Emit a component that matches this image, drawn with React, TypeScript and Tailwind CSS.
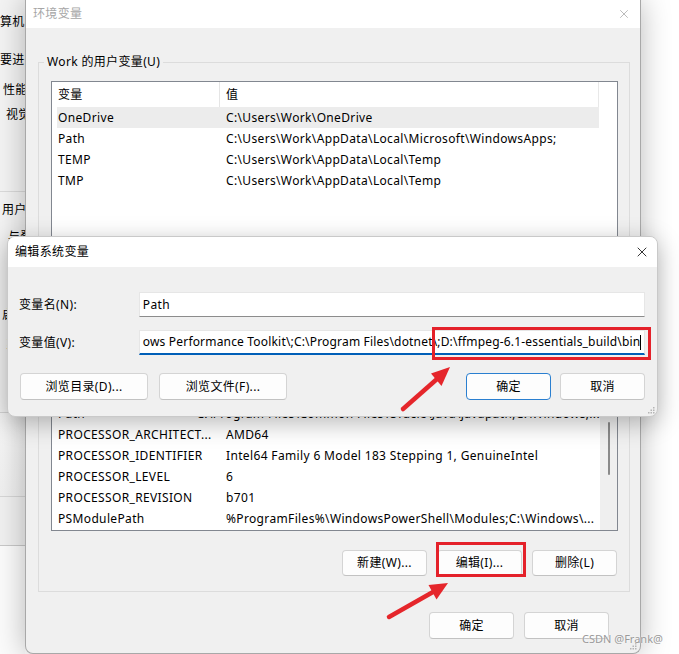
import { X } from "lucide-react";

const userRows = [
  { name: "OneDrive", value: "C:\\Users\\Work\\OneDrive", selected: true },
  { name: "Path", value: "C:\\Users\\Work\\AppData\\Local\\Microsoft\\WindowsApps;" },
  { name: "TEMP", value: "C:\\Users\\Work\\AppData\\Local\\Temp" },
  { name: "TMP", value: "C:\\Users\\Work\\AppData\\Local\\Temp" },
];

const sysRows = [
  { name: "Path", value: "C:\\Program Files\\Common Files\\Oracle\\Java\\javapath;C:\\Windows;..." },
  { name: "PROCESSOR_ARCHITECT...", value: "AMD64" },
  { name: "PROCESSOR_IDENTIFIER", value: "Intel64 Family 6 Model 183 Stepping 1, GenuineIntel" },
  { name: "PROCESSOR_LEVEL", value: "6" },
  { name: "PROCESSOR_REVISION", value: "b701" },
  { name: "PSModulePath", value: "%ProgramFiles%\\WindowsPowerShell\\Modules;C:\\Windows\\..." },
];

function Btn({ label, w, primary }: { label: string; w: string; primary?: boolean }) {
  return (
    <div
      className={`${w} h-full flex items-center justify-center rounded-[4px] bg-[#fdfdfd] border ${
        primary ? "border-[#2a7fd0]" : "border-[#d4d4d4] border-b-[#c2c2c2]"
      } text-[12px] text-black`}
    >
      {label}
    </div>
  );
}

function Grip() {
  return (
    <svg width="7" height="7" viewBox="0 0 7 7" className="fill-[#b4b4b4]">
      <rect x="5" y="0" width="1.5" height="1.5" />
      <rect x="2.5" y="2.5" width="1.5" height="1.5" />
      <rect x="5" y="2.5" width="1.5" height="1.5" />
      <rect x="0" y="5" width="1.5" height="1.5" />
      <rect x="2.5" y="5" width="1.5" height="1.5" />
      <rect x="5" y="5" width="1.5" height="1.5" />
    </svg>
  );
}

function BackWindow() {
  return (
    <div className="absolute left-0 top-0 w-[25px] h-[654px] overflow-hidden bg-[#f3f3f3] flex flex-col text-[12px] text-black leading-none">
      <div className="h-[35px] pt-[16px] whitespace-nowrap">算机名</div>
      <div className="h-[30px] pt-[19px] whitespace-nowrap">要进行</div>
      <div className="h-[29px] pt-[19px] pl-[3px] whitespace-nowrap">性能</div>
      <div className="h-[26px] pt-[15px] pl-[6px] whitespace-nowrap">视觉</div>
      <div className="h-[72px] border-b border-[#dadada]" />
      <div className="h-[25px] pt-[12px] pl-[2px] whitespace-nowrap">用户</div>
      <div className="h-[90px] pt-[14px] pl-[8px] whitespace-nowrap">与登</div>
      <div className="h-[24px] pt-[2px] pl-[2px] whitespace-nowrap">启</div>
      <div className="h-[81px] pt-[8px] pl-[6px] whitespace-nowrap">系</div>
      <div className="h-[84px] border-t border-[#d6d6d6] bg-gradient-to-b from-[#f6f6f6] to-[#efefef]" />
      <div className="h-[49px] border-t border-[#d6d6d6] bg-[#f0f0f0]" />
      <div className="flex-1 border-t border-[#c8c8c8] bg-[#fbfbfb]" />
    </div>
  );
}

function EnvDialog() {
  return (
    <div className="absolute left-[25px] top-0 w-[616px] h-[654px] rounded-b-[8px] overflow-hidden bg-[#f0f0f0] border-l border-r border-b border-[#a8a8a8] shadow-[0_0_30px_rgba(0,0,0,0.28)] flex flex-col">
      <div className="h-[28px] bg-white flex items-center justify-between pl-[7px] pr-[9px] shrink-0">
        <span className="text-[12px] text-[#a6a6a6]">环境变量</span>
        <X size={14} strokeWidth={1} className="text-[#8a8a8a]" />
      </div>
      <div className="flex flex-col pt-[34px]">
        <div className="relative ml-[12px] w-[592px] h-[238px] border border-[#dcdcdc] pt-[18px] pl-[12px]">
          <span className="absolute -top-[9px] left-[5px] px-[3px] bg-[#f0f0f0] text-[12px] leading-[16px] text-black">
            Work 的用户变量(U)
          </span>
          <div className="w-[567px] h-[200px] border border-[#828790] bg-white flex flex-col">
            <div className="w-[547px] h-[25px] flex items-center border-r border-[#e8e8e8] text-[12px] text-black">
              <div className="w-[168px] h-full flex items-center pl-[6px] border-r border-[#e5e5e5]">变量</div>
              <div className="pl-[6px]">值</div>
            </div>
            {userRows.map((r) => (
              <div
                key={r.name}
                className={`ml-[5px] w-[542px] h-[21px] flex items-center text-[12px] text-black ${
                  r.selected ? "bg-[#ececec]" : ""
                }`}
              >
                <div className="w-[169px] pl-[1px] truncate">{r.name}</div>
                <div className="whitespace-nowrap">{r.value}</div>
              </div>
            ))}
          </div>
        </div>
        <div className="relative ml-[12px] mt-[20px] w-[592px] h-[272px] border border-[#dcdcdc] pl-[12px] flex flex-col justify-end pb-[15px]">
          <div className="w-[567px] h-[200px] border border-[#828790] bg-white flex">
            <div className="w-[548px] h-full flex flex-col justify-end pb-[1px] overflow-hidden">
              {sysRows.map((r) => (
                <div key={r.name} className="ml-[5px] h-[21px] shrink-0 flex items-center text-[12px] text-black">
                  <div className="w-[169px] pl-[1px] whitespace-nowrap overflow-hidden">{r.name}</div>
                  <div className="whitespace-nowrap">{r.value}</div>
                </div>
              ))}
            </div>
            <div className="flex-1 bg-[#efefef] flex justify-center pt-[90px]">
              <div className="w-[2px] h-[53px] rounded-full bg-[#8a8a8a]" />
            </div>
          </div>
          <div className="mt-[19px] h-[26px] flex justify-end gap-[10px] pr-[12px]">
            <Btn label="新建(W)..." w="w-[85px]" />
            <Btn label="编辑(I)..." w="w-[85px]" />
            <Btn label="删除(L)" w="w-[85px]" />
          </div>
        </div>
        <div className="mt-[20px] h-[27px] flex justify-end gap-[10px] pr-[31px]">
          <Btn label="确定" w="w-[85px]" />
          <Btn label="取消" w="w-[85px]" />
        </div>
      </div>
      <div className="absolute right-[3px] bottom-[3px]">
        <Grip />
      </div>
    </div>
  );
}

function EditDialog() {
  return (
    <div className="absolute left-[7px] top-[236px] w-[651px] h-[181px] rounded-[8px] overflow-hidden border border-[#c9c9c9] bg-[#f0f0f0] shadow-[0_6px_24px_rgba(0,0,0,0.28)] flex flex-col">
      <div className="h-[30px] bg-white flex items-center justify-between pl-[7px] pr-[7px] shrink-0">
        <span className="text-[12px] text-black">编辑系统变量</span>
        <X size={16} strokeWidth={1.2} className="text-black" />
      </div>
      <div className="flex flex-col pt-[25px] pl-[11px] pr-[12px]">
        <div className="h-[25px] flex items-center">
          <div className="w-[120px] text-[12px] text-black">变量名(N):</div>
          <div className="w-[507px] h-full bg-white border border-[#e6e6e6] border-b-[#8c8c8c] flex items-center pl-[3px] text-[12px] text-black">
            Path
          </div>
        </div>
        <div className="mt-[13px] h-[25px] flex items-center">
          <div className="w-[120px] text-[12px] text-black">变量值(V):</div>
          <div className="w-[507px] h-full bg-white border border-[#e6e6e6] border-b-2 border-b-[#005fb8] flex items-center pl-[3px] text-[12px] text-black overflow-hidden whitespace-nowrap tracking-[0.18px]">
            <span>ows Performance Toolkit\;C:\Program Files\dotnet\;D:\ffmpeg-6.1-essentials_build\bin</span>
            <span className="w-px h-[15px] bg-black shrink-0" />
          </div>
        </div>
        <div className="mt-[18px] h-[27px] flex">
          <div className="flex gap-[11px] h-full pl-[1px]">
            <Btn label="浏览目录(D)..." w="w-[128px]" />
            <Btn label="浏览文件(F)..." w="w-[128px]" />
          </div>
          <div className="flex-1" />
          <div className="flex gap-[9px] h-full">
            <Btn label="确定" w="w-[85px]" primary />
            <Btn label="取消" w="w-[85px]" />
          </div>
        </div>
      </div>
      <div className="absolute right-[2px] bottom-[2px]">
        <Grip />
      </div>
    </div>
  );
}

function Arrows() {
  return (
    <svg className="absolute left-0 top-0 pointer-events-none" width="679" height="654" viewBox="0 0 679 654">
      <line x1="403" y1="409" x2="437" y2="379" stroke="#e5262b" strokeWidth="4.5" strokeLinecap="round" />
      <polygon points="450,367 441.5,386 431,373.5" fill="#e5262b" />
      <line x1="389" y1="617" x2="433" y2="592" stroke="#e5262b" strokeWidth="4.5" strokeLinecap="round" />
      <polygon points="448,583 436.5,599.5 428.5,585" fill="#e5262b" />
    </svg>
  );
}

export default function App() {
  return (
    <div className="relative w-[679px] h-[654px] overflow-hidden bg-white tracking-[0.35px] font-['Noto_Sans','Noto_Sans_CJK_SC',sans-serif]">
      <BackWindow />
      <EnvDialog />
      <EditDialog />
      <div className="absolute left-[432px] top-[327px] w-[219px] h-[33px] border-[3px] border-[#e4212a]" />
      <div className="absolute left-[436px] top-[542px] w-[90px] h-[35px] border-[3px] border-[#e4212a]" />
      <Arrows />
      <div className="absolute left-[582px] top-[631px] text-[11px] leading-[16px] tracking-normal text-[#9a9a9a] [text-shadow:0_0_2px_#fff]">
        CSDN @Frank@
      </div>
    </div>
  );
}
